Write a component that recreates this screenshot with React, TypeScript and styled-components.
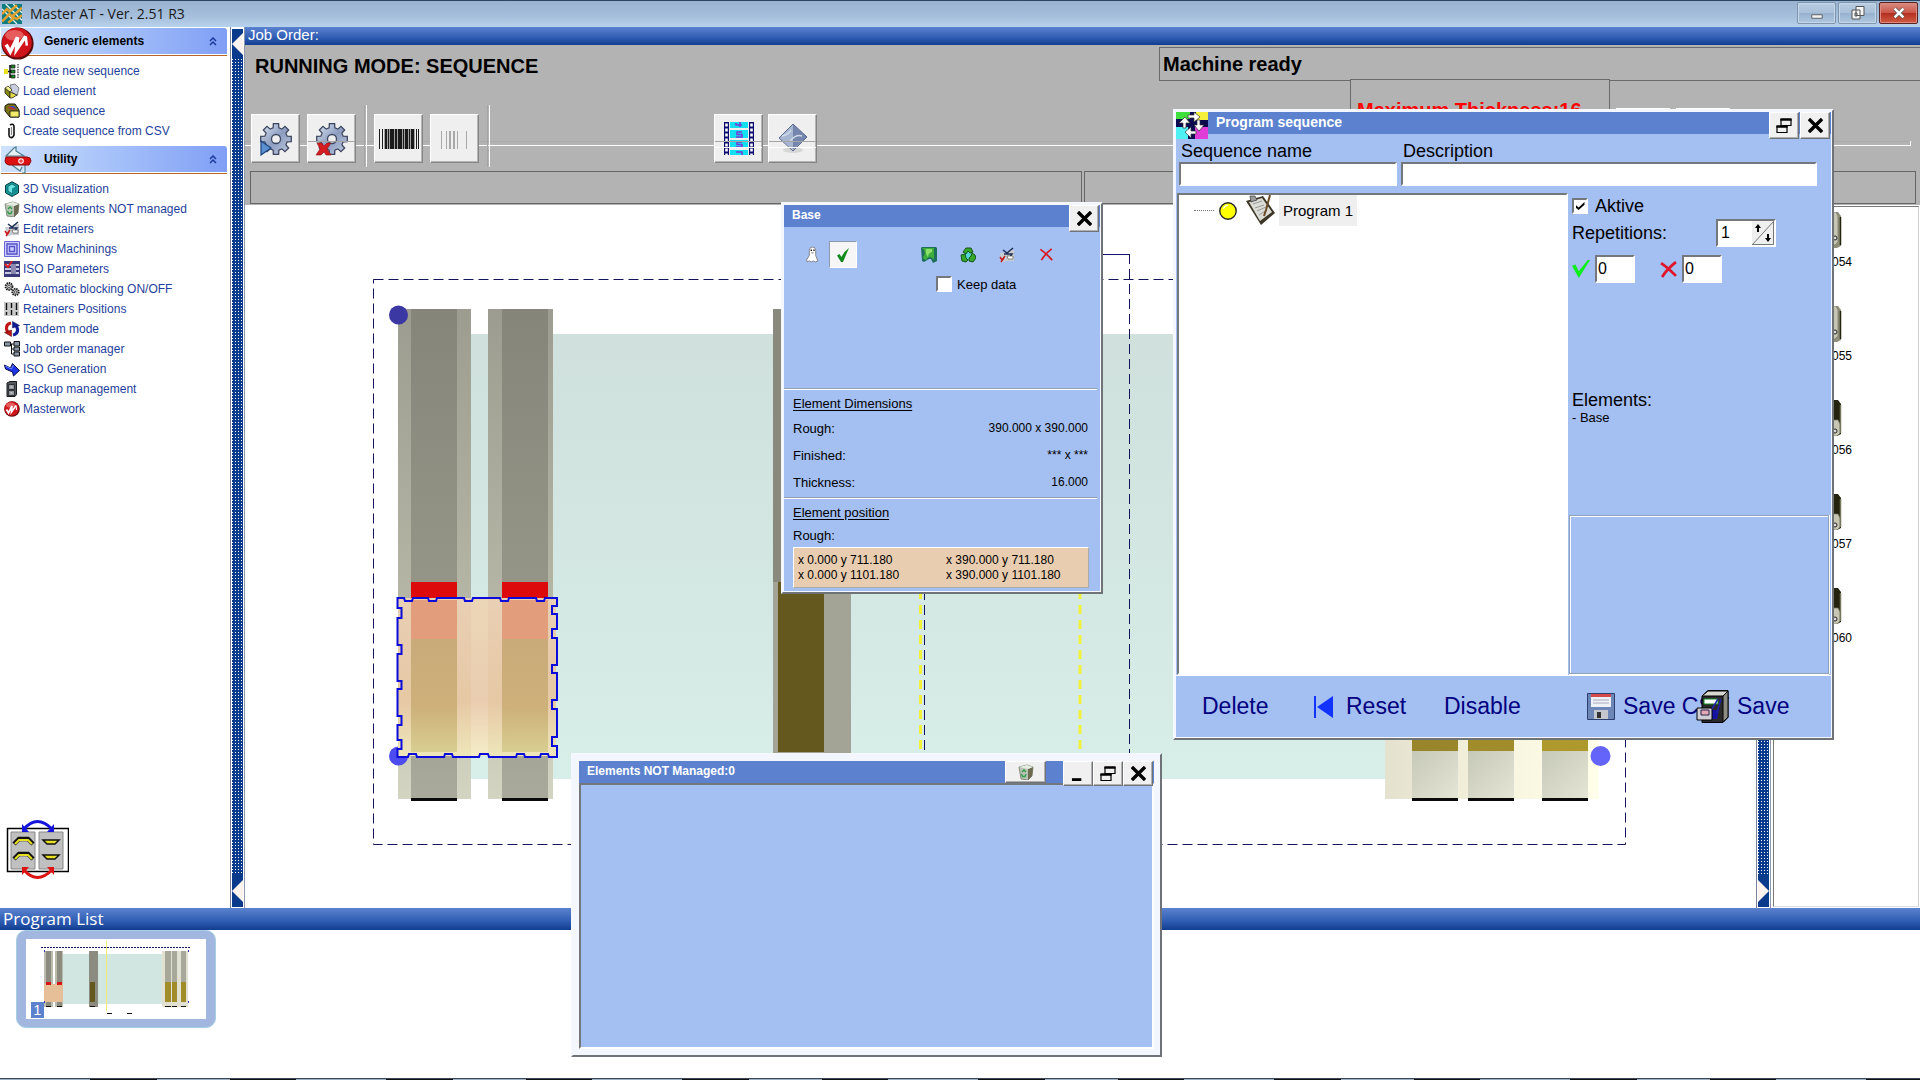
import React from "react";
import styled, { createGlobalStyle, css } from "styled-components";

const GlobalStyle = createGlobalStyle`
  * { box-sizing: border-box; }
  body { margin: 0; background: #fff; font-family: "Liberation Sans", Arial, sans-serif; color: #000; }
  button, input { font: inherit; color: inherit; }
  button { padding: 0; cursor: pointer; }
  svg { display: block; flex: none; }
`;

const FACE = "#a4bff1";
const CAPTION = "#5c82cf";
const NAVY = "#000080";

/* ---------- page frame ---------- */

const Page = styled.div`
  position: relative;
  display: flex;
  flex-direction: column;
  min-height: 100vh;
  overflow: hidden;
`;

const TitleBar = styled.header`
  display: flex;
  align-items: center;
  height: 27px;
  padding: 0 2px;
  border-top: 1px solid #2c4560;
  background: linear-gradient(#98b2cf, #a5bfdc 60%, #b8d2ec);
`;

const AppName = styled.h1`
  flex: 1;
  margin: 0 0 0 8px;
  font: 400 14px/20px "Open Sans", "Noto Sans", sans-serif;
  color: #1a1a1a;
`;

const FrameButtons = styled.div`
  display: flex;
  gap: 2px;
  align-self: flex-start;
  padding-top: 1px;
`;

const FrameButton = styled.button<{ $danger?: boolean }>`
  display: grid;
  place-items: center;
  width: 39px;
  height: 22px;
  border: 1px solid ${(p) => (p.$danger ? "#5b2222" : "#7f95ad")};
  border-radius: 2px;
  box-shadow: inset 0 0 0 1px ${(p) => (p.$danger ? "#dd8a80" : "#c5d8ea")};
  background: ${(p) =>
    p.$danger
      ? "linear-gradient(#d98c80, #c9584a 48%, #b52f20 52%, #cf5c44)"
      : "linear-gradient(#b9cde2, #a9c0d9 48%, #98b1cd 52%, #b0c8e0)"};
`;

const Workspace = styled.div`
  display: flex;
  flex: 1;
`;

/* ---------- sidebar ---------- */

const Sidebar = styled.nav`
  display: flex;
  flex-direction: column;
  width: 230px;
  padding: 1px 3px 0 1px;
`;

const GroupHeader = styled.h2`
  position: relative;
  display: flex;
  align-items: center;
  justify-content: space-between;
  height: 26px;
  margin: 0;
  padding: 0 10px 0 43px;
  border-radius: 0 3px 0 0;
  background: linear-gradient(90deg, #cfe2fd, #a9c4fa 45%, #809ff5);
  font-size: 12px;
  line-height: 16px;
`;

const GroupRule = styled.div`
  height: 2px;
  border-bottom: 1px solid #b5652a;
`;

const GroupIcon = styled.span`
  position: absolute;
  left: 0;
  top: -1px;
`;

const Links = styled.ul`
  margin: 0;
  padding: 5px 0;
  list-style: none;
`;

const SideLink = styled.a`
  display: flex;
  align-items: center;
  gap: 3px;
  height: 20px;
  padding-left: 3px;
  color: #1f3f9c;
  font-size: 12px;
  text-decoration: none;
`;

const SwapButton = styled.button`
  width: 64px;
  height: 60px;
  margin: auto 0 28px 4px;
  border: 0;
  background: none;
`;

/* ---------- splitters ---------- */

const Splitter = styled.div`
  display: flex;
  flex-direction: column;
  width: 15px;
  padding: 2px 1px 1px 1px;
  border-left: 1px solid #77829a;
  border-right: 1px solid #8b98ae;
  background: #fff;
`;

const SplitArrow = styled.button<{ $h: number }>`
  display: grid;
  place-items: center;
  height: ${(p) => p.$h}px;
  border: 0;
  background: #0a3a8c;
`;

const SplitGrip = styled.div`
  flex: 1;
  background: conic-gradient(at 1px 1px, transparent 75%, #fff 0) 0 0 / 3px 3px #0a3a8c;
`;

/* ---------- main area ---------- */

const Main = styled.main`
  display: flex;
  flex: 1;
  flex-direction: column;
  min-width: 0;
`;

const barGradient = css`
  background: linear-gradient(#5b82cf, #2f5db3 60%, #123d90);
  color: #fff;
`;

const JobBar = styled.div`
  ${barGradient}
  height: 18px;
  padding-left: 3px;
  font-size: 15px;
  line-height: 16px;
`;

const Console = styled.section`
  display: flex;
  flex-direction: column;
  height: 160px;
  background: #b3b3b3;
`;

const StatusRow = styled.div`
  display: flex;
  height: 60px;
`;

const RunningMode = styled.h2`
  flex: 1;
  margin: 0;
  padding: 9px 0 0 10px;
  font-size: 20px;
  line-height: 24px;
`;

const StatusColumn = styled.div`
  flex: 0 0 761px;
  padding-top: 2px;
`;

const MachineState = styled.div`
  height: 34px;
  padding-left: 3px;
  border: 1px solid #6a6a6a;
  border-right: 0;
  font-size: 20px;
  font-weight: 700;
  line-height: 32px;
`;

const ThicknessRow = styled.div`
  display: flex;
  gap: 6px;
  align-items: flex-start;
  margin: -2px 0 0 191px;
`;

const Thickness = styled.div`
  width: 260px;
  height: 60px;
  padding-left: 6px;
  border: 1px solid #6a6a6a;
  border-bottom: 0;
  background: #b3b3b3;
  color: #f00;
  font-size: 20px;
  font-weight: 700;
  line-height: 60px;
`;

const RearTab = styled.button`
  width: 54px;
  height: 24px;
  margin-top: 29px;
  border: 1px solid #fff;
  background: #efefef;
`;

const ToolRow = styled.div`
  position: relative;
  display: flex;
  align-items: flex-start;
  height: 62px;
  padding-left: 6px;
`;

const Groove = styled.div`
  position: absolute;
  left: 0;
  right: 9px;
  top: 36px;
  height: 5px;
  border: solid #fff;
  border-width: 0 1px 1px 0;
  box-shadow: inset 0 1px #aaa;
`;

const ToolButton = styled.button<{ $gap?: number; $line?: "thin" | "full" }>`
  position: relative;
  display: grid;
  place-items: center;
  width: 49px;
  height: 49px;
  margin: 9px 0 0 ${(p) => p.$gap ?? 0}px;
  border: 1px solid;
  border-color: #fff #858585 #858585 #fff;
  box-shadow: inset -1px -1px #b5b5b5;
  background: #efefef;
  &::after {
    content: "";
    position: absolute;
    display: ${(p) => (p.$line ? "block" : "none")};
    inset: 26px 0 auto 0;
    height: 5px;
    border-top: 1px solid #a5a5a5;
    border-bottom: 1px solid ${(p) => (p.$line === "full" ? "#fff" : "transparent")};
  }
`;

const ToolSeparator = styled.div`
  position: relative;
  width: 3px;
  height: 62px;
  margin-left: 8px;
  border-left: 1px solid #a5a5a5;
  border-right: 1px solid #fff;
`;

const InfoRow = styled.div`
  display: flex;
  gap: 2px;
  padding: 4px 4px 0 5px;
`;

const InfoCell = styled.div`
  flex: 1;
  height: 33px;
  border: 1px solid #666;
`;

const ViewRow = styled.div`
  display: flex;
  flex: 1;
`;

const Canvas = styled.div`
  flex: 1;
  min-width: 0;
  overflow: hidden;
`;

const ToolRack = styled.ul`
  flex: 0 0 146px;
  margin: 1px 1px 1px 2px;
  padding: 5px 0 0;
  border: 1px solid #777;
  border-color: #777 #ccc #ddd #777;
  list-style: none;
`;

const RackItem = styled.li`
  display: flex;
  flex-direction: column;
  gap: 6px;
  height: 94px;
  padding-left: 47px;
  font-size: 12px;
  line-height: 16px;
`;

const RackLabel = styled.span`
  padding-left: 11px;
`;

/* ---------- program list ---------- */

const ListBar = styled.div`
  ${barGradient}
  height: 22px;
  padding-left: 3px;
  font: 400 17px/21px "Open Sans", "Noto Sans", sans-serif;
`;

const ProgramList = styled.section`
  height: 148px;
  padding-left: 16px;
`;

const Thumb = styled.button`
  position: relative;
  display: block;
  width: 200px;
  height: 98px;
  padding: 7px 9px;
  border: 1px solid #a6cde2;
  border-radius: 10px;
  background: #a2b7e0;
`;

const ThumbIndex = styled.span`
  position: absolute;
  left: 14px;
  bottom: 9px;
  width: 13px;
  height: 16px;
  background: ${CAPTION};
  color: #fff;
  font-size: 14px;
  line-height: 16px;
`;

const TaskStrip = styled.footer`
  height: 2px;
  border-top: 1px solid #39485a;
  background: repeating-linear-gradient(90deg, #9fb0c0 0 90px, #111 90px 157px, #9fb0c0 157px 230px, #111 230px 296px);
`;

/* ---------- floating windows ---------- */

const Win = styled.section<{ $x: number; $y: number; $w: number; $frame?: boolean }>`
  position: absolute;
  left: ${(p) => p.$x}px;
  top: ${(p) => p.$y}px;
  width: ${(p) => p.$w}px;
  border: 2px solid;
  border-color: #f4f7fd #6f7377 #6f7377 #f4f7fd;
  padding: ${(p) => (p.$frame ? "6px" : "1px")};
  background: ${(p) => (p.$frame ? "#f3f6fd" : FACE)};
  box-shadow: ${(p) => (p.$frame ? "none" : "inset 0 0 0 1px #f4f7fd")};
`;

const Caption = styled.header`
  display: flex;
  align-items: flex-start;
  height: 22px;
  background: ${CAPTION};
  color: #fff;
`;

const CaptionText = styled.h3<{ $size: number }>`
  flex: 1;
  margin: 0 0 0 8px;
  font-size: ${(p) => p.$size}px;
  line-height: 20px;
`;

const CaptionButton = styled.button<{ $w?: number; $h?: number; $after?: number }>`
  position: relative;
  display: grid;
  place-items: center;
  width: ${(p) => p.$w ?? 30}px;
  height: ${(p) => p.$h ?? 27}px;
  margin-right: ${(p) => p.$after ?? 0}px;
  border: 1px solid;
  border-color: #fff #6f7377 #6f7377 #fff;
  box-shadow: inset -1px -1px #b0b0b0;
  background: #f0f0f0;
`;

const sunken = css`
  border: solid;
  border-width: 2px;
  border-color: #74787c #fff #fff #74787c;
  background: #fff;
`;

const Check = styled.input<{ $size: number }>`
  ${sunken}
  appearance: none;
  display: grid;
  place-items: center;
  width: ${(p) => p.$size}px;
  height: ${(p) => p.$size}px;
  margin: 0;
  &:checked::after {
    content: "";
    width: 9px;
    height: 8px;
    background: #000;
    clip-path: polygon(0 35%, 35% 68%, 100% 0, 100% 35%, 35% 100%, 0 68%);
  }
`;

/* Base window */

const IconBar = styled.div`
  display: flex;
  gap: 11px;
  margin-top: 14px;
  padding-left: 14px;
`;

const FlatButton = styled.button<{ $on?: boolean; $before?: number }>`
  display: grid;
  place-items: center;
  width: 28px;
  height: 27px;
  margin-left: ${(p) => p.$before ?? 0}px;
  border: 1px solid;
  border-color: ${(p) => (p.$on ? "#8d98ad #fff #fff #8d98ad" : "transparent")};
  background: ${(p) => (p.$on ? "#f6f6f6" : "none")};
`;

const KeepData = styled.label`
  display: flex;
  align-items: center;
  gap: 5px;
  height: 16px;
  margin: 8px 0 96px 152px;
  font-size: 13px;
`;

const Rule = styled.hr`
  height: 2px;
  margin: 1px 3px 2px 0;
  border: 0;
  border-top: 1px solid #92a0b4;
  background: #fff;
`;

const SubTitle = styled.h4`
  height: 23px;
  margin: 0;
  padding-left: 9px;
  font-size: 13px;
  font-weight: 400;
  line-height: 24px;
  text-decoration: underline;
  text-underline-offset: 2px;
`;

const DataRow = styled.div<{ $h?: number }>`
  display: flex;
  justify-content: space-between;
  height: ${(p) => p.$h ?? 27}px;
  padding: 0 12px 0 9px;
  font-size: 13px;
  line-height: ${(p) => p.$h ?? 27}px;
`;

const Figure = styled.span`
  font-size: 12px;
`;

const Corners = styled.div`
  display: grid;
  grid-template-columns: 148px 1fr;
  align-content: start;
  height: 41px;
  margin: 0 11px 3px 9px;
  padding: 5px 4px 0;
  border: 1px solid;
  border-color: #fff #aaa #aaa #fff;
  background: #e9cdb0;
  font-size: 12px;
  line-height: 15px;
`;

/* Program sequence window */

const SequenceIcon = styled.span`
  position: relative;
  height: 27px;
`;

const Fields = styled.div`
  display: grid;
  grid-template-columns: 218px 1fr;
  gap: 4px;
  padding: 7px 14px 0 3px;
`;

const Field = styled.label`
  display: block;
  font-size: 18px;
  line-height: 21px;
`;

const FieldText = styled.span`
  padding-left: 2px;
`;

const FieldBox = styled.input`
  ${sunken}
  display: block;
  width: 100%;
  height: 24px;
`;

const SequenceBody = styled.div`
  display: grid;
  grid-template-columns: 391px 1fr;
  margin-top: 7px;
  padding-left: 1px;
  min-height: 482px;
`;

const Tree = styled.div`
  ${sunken}
`;

const TreeNode = styled.div`
  display: flex;
  align-items: center;
  height: 31px;
  padding-left: 15px;
`;

const TreeBranch = styled.span`
  width: 20px;
  margin-right: 5px;
  border-top: 1px dotted #777;
`;

const TreeLabel = styled.span`
  height: 31px;
  margin-left: 2px;
  padding: 0 4px;
  background: #efefef;
  font-size: 15px;
  line-height: 31px;
`;

const Side = styled.div`
  display: flex;
  flex-direction: column;
  padding: 3px 2px 0 4px;
`;

const SideLine = styled.div<{ $h: number; $top?: number }>`
  display: flex;
  align-items: center;
  height: ${(p) => p.$h}px;
  margin-top: ${(p) => p.$top ?? 0}px;
  font-size: 18px;
`;

const ActiveLabel = styled.label`
  display: flex;
  align-items: center;
  gap: 7px;
`;

const Spinner = styled.div`
  ${sunken}
  display: flex;
  width: 60px;
  height: 28px;
  margin: 0 53px 0 auto;
`;

const SpinnerValue = styled.input`
  width: 34px;
  min-width: 0;
  padding: 0 3px;
  border: 0;
  background: none;
  font-size: 16px;
`;

const SpinnerButton = styled.button`
  width: 22px;
  border: 0;
  background: #efefef;
`;

const CountBox = styled.input<{ $after?: number }>`
  ${sunken}
  width: 40px;
  height: 28px;
  margin: 0 ${(p) => p.$after ?? 0}px 0 5px;
  padding: 0 1px;
  font-size: 16px;
`;

const ElementName = styled.div`
  font-size: 13px;
  line-height: 16px;
`;

const Preview = styled.div`
  flex: 1;
  margin: 89px 0 1px -3px;
  border: 1px solid #8fa0ba;
  box-shadow: inset 1px 1px #fff, 0 1px #fff, 1px 0 #fff;
`;

const Actions = styled.footer`
  display: grid;
  grid-template-columns: 112px 130px 143px 109px 1fr;
  align-items: center;
  height: 62px;
  padding-left: 26px;
  border-top: 1px solid #fff;
`;

const Action = styled.button`
  position: relative;
  display: flex;
  align-items: center;
  gap: 8px;
  width: max-content;
  border: 0;
  background: none;
  color: ${NAVY};
  font-size: 23px;
  white-space: nowrap;
`;

/* Elements NOT Managed window */

const Tray = styled.div`
  ${sunken}
  height: 266px;
  background: ${FACE};
`;

/* ---------- drawings ---------- */

const Ico = ({ s = 16, w, h, children, vb }: { s?: number; w?: number; h?: number; vb?: string; children: React.ReactNode }) => (
  <svg width={w ?? s} height={h ?? s} viewBox={vb ?? "0 0 16 16"} aria-hidden="true">{children}</svg>
);

const BinArt = () => (
  <>
    <path d="M1 3l8-2 6 2-1 9-4 4-7-1z" fill="#b9c4b4" stroke="#5d6b58" strokeWidth=".7" />
    <path d="M10 5l5-2-1 9-4 4z" fill="#6d6a52" />
    <path d="M1 3l9 2 5-2-6-2z" fill="#e6ece2" />
    <path d="M4 8l2-2 2 2M8 10l-1 2.500H4.500L3.500 10" fill="none" stroke="#2f9a4a" strokeWidth="1.300" />
  </>
);

const MasterArt = () => (
  <>
    <circle cx="8" cy="8" r="7.800" fill="#5a0808" />
    <circle cx="7.700" cy="7.600" r="7.200" fill="#d0141c" />
    <ellipse cx="6.500" cy="4" rx="4.500" ry="2.600" fill="#ef7a78" opacity=".7" />
    <path d="M2.500 8.500l2 3.500L8 5 7.500 11l4.500-6.500" fill="none" stroke="#fff" strokeWidth="1.700" />
    <path d="M12 4.500l.5 4.500" fill="none" stroke="#fff" strokeWidth="1.200" />
  </>
);

const EditArt = () => (
  <>
    <path d="M1 6h6l3-3h5v11H7l-2 1H3z" fill="#c9cdd2" />
    <path d="M4 3l4 3 6-5M5 7h8l-3 4" fill="none" stroke="#1f2f55" strokeWidth="1.500" />
    <path d="M8 9h6v3H9z" fill="#fff" stroke="#444" strokeWidth=".6" />
    <path d="M1 10l2 3 3-4M2 15l3-4" fill="none" stroke="#c81818" strokeWidth="1.400" />
  </>
);

const art: Record<string, React.ReactNode> = {
  newSeq: (
    <>
      <path d="M0 6h4v5H0z" fill="#e8e020" />
      <path d="M4 8.500h3M6 2v13M6 3h5M6 8h5M6 13h5" stroke="#111" strokeWidth="1.500" />
      <path d="M7 2h4v3H7zM7 7h4v3H7zM7 12h4v3H7z" fill="#1f8a2c" stroke="#111" strokeWidth=".7" />
      <path d="M14 1v15" stroke="#888" strokeWidth="2" strokeDasharray="1.500 1" />
    </>
  ),
  loadEl: (
    <>
      <path d="M6 2l5-1 4 4-2 8-5-4z" fill="#c8cce0" stroke="#555" strokeWidth=".7" />
      <path d="M1 5l5 4v6l-5-5z" fill="#8a8a10" stroke="#222" strokeWidth=".8" />
      <path d="M6 9l7 3-5 3H6z" fill="#e6df4a" stroke="#222" strokeWidth=".8" />
      <path d="M1 5l3-2 4 4-2 2z" fill="#f4f08a" stroke="#222" strokeWidth=".7" />
    </>
  ),
  loadSeq: (
    <>
      <path d="M1 3l3-2h7l4 6v7H6L1 8z" fill="#7a7410" stroke="#111" />
      <path d="M6 8h9v6H6z" fill="#f3ea6a" stroke="#111" strokeWidth=".8" />
      <path d="M3 4l6-1 4 3-5 1z" fill="#b03a3a" />
      <path d="M5 3l5 0 3 3z" fill="#2f4fc0" />
    </>
  ),
  csv: (
    <>
      <path d="M6 2q3-2 4 1v9q-1 3-3.500 2.500Q5 14 5 12V5" fill="none" stroke="#111" strokeWidth="1.600" />
      <path d="M7.500 4v8" stroke="#888" strokeWidth="1.200" />
    </>
  ),
  cube: (
    <>
      <path d="M8 .7l6.500 3.600v7.500L8 15.500 1.500 11.800V4.300z" fill="#17989c" stroke="#06393c" />
      <path d="M8 3l4 2.300v5L8 12.600 4 10.300v-5z" fill="#6fe3e0" stroke="#0b5c60" strokeWidth=".8" />
      <path d="M8 7.500v5l4-2.300v-5z" fill="#129094" />
    </>
  ),
  bin: <BinArt />,
  edit: <EditArt />,
  machinings: (
    <>
      <path d="M.5.500h15v15H.500z" fill="#cfcfff" stroke="#6a68d8" />
      <path d="M3 3h10v10H3zM5.500 5.500h5v5h-5z" fill="none" stroke="#5450c8" strokeWidth="1.400" />
    </>
  ),
  iso: (
    <>
      <path d="M0 0h16v16H0z" fill="#3b3a78" />
      <path d="M1 4h14M1 8h14M1 12h14" stroke="#c9c9e4" strokeWidth="2" />
      <path d="M7 3h5v10H7z" fill="#8c88b0" />
      <path d="M1 3l3 3 4-6" fill="none" stroke="#e02020" strokeWidth="1.800" />
    </>
  ),
  gears: (
    <>
      <circle cx="5" cy="5.500" r="3.400" fill="#bbb" stroke="#222" strokeWidth="2" strokeDasharray="1.400 .8" />
      <circle cx="5" cy="5.500" r="1.200" fill="#fff" stroke="#222" strokeWidth=".7" />
      <circle cx="11.500" cy="11" r="3.200" fill="#bbb" stroke="#222" strokeWidth="2" strokeDasharray="1.400 .8" />
      <circle cx="11.500" cy="11" r="1.100" fill="#fff" stroke="#222" strokeWidth=".7" />
    </>
  ),
  retainers: (
    <>
      <path d="M0 1h15v14H0z" fill="#c9c9c9" />
      <path d="M2.500 2v7M7.500 2v5M12.500 2v7M2.500 11v3M7.500 9v5M12.500 11v3" stroke="#111" strokeWidth="1.400" />
    </>
  ),
  tandem: (
    <>
      <path d="M7 2Q2 3 2.500 8l1.500 4" fill="none" stroke="#c01414" strokeWidth="3.200" />
      <path d="M.5 11.500l7 4V9z" fill="#c01414" stroke="#400" strokeWidth=".5" />
      <path d="M9 14q5-1 4.500-6L12 4" fill="none" stroke="#101e9c" strokeWidth="3.200" />
      <path d="M15.500 4.500l-7-4V7z" fill="#101e9c" stroke="#004" strokeWidth=".5" />
    </>
  ),
  jobs: (
    <>
      <path d="M5 3h5M7.500 3v10h3M7.500 8h3" fill="none" stroke="#111" />
      <path d="M.5 1h6v4h-6zM10 .5h5.500V5H10zM10 6h5.500v4H10zM10 11h5.500v4H10z" fill="#8b97a6" stroke="#111" />
    </>
  ),
  arrow: (
    <>
      <path d="M.5 4l6 3 2-4.500 7 7-6 5.500-1-4-7-3z" fill="#1e34e0" stroke="#08104c" />
      <path d="M1.500 5l6 3 2-4" fill="none" stroke="#6f8cff" />
    </>
  ),
  backup: (
    <>
      <path d="M3 2l3-1.500h6.500v13L11 15.500H3z" fill="#55595e" stroke="#17191b" />
      <path d="M4.500 3.500h6v5h-6zM4.500 9.500h6v5h-6z" fill="#8e9499" stroke="#222" strokeWidth=".8" />
      <path d="M6.500 6h2M6.500 12h2" stroke="#eee" />
    </>
  ),
  master: <MasterArt />,
  ghost: (
    <>
      <path d="M5 4q0-3 3-3t3 3v5l2 5-2 1-2-1-2 1-2-1-2 1-.5-2L5 9z" fill="#fff" stroke="#777" strokeWidth=".8" />
      <path d="M6.300 4h1.200M8.800 4H10" stroke="#000" strokeWidth="1.300" />
      <path d="M7 6.500h2" stroke="#555" strokeWidth=".8" />
    </>
  ),
  tick: <path d="M2 8.500l2.500-1.500 2 3Q9 4.500 14 1 11 8 8 15H6z" fill="#138a1e" />,
  exportArrow: (
    <>
      <path d="M0 1l1-1h14l1 1v13l-4 2-2-4-2 0-5 3-2-1z" fill="#1d6f5a" />
      <path d="M1 1h12v12l-2-2q-3-3-6 2-3-1-3-3 3-3 1-7z" fill="#3fae3c" />
      <path d="M5 2h6v3Q7 6 7 10 4 6 5 2z" fill="#8be06a" />
    </>
  ),
  recycle: (
    <>
      <circle cx="8" cy="8.500" r="4.200" fill="#53d6d8" />
      <path d="M3 5l3-4h5l2 4-3 1-2-2-2 3zM1 8l4-1 1 4 2 2-2 2-4-1zM15 8l-3-2-1 3-2 2v3l4 1 3-4z" fill="#35a82a" stroke="#0c4a12" strokeWidth=".9" />
    </>
  ),
  cross: <path d="M1.500 2.500Q8 7 14 14M13.500 2Q7 7 2.500 14" fill="none" stroke="#d9141c" strokeWidth="1.800" />,
};

const gearPath = (() => {
  const pts: string[] = [];
  const teeth = 8;
  for (let i = 0; i < teeth; i++) {
    const a = (i / teeth) * Math.PI * 2 - Math.PI / 2;
    [[-0.25, 11.5], [-0.17, 15.5], [0.17, 15.5], [0.25, 11.5]].forEach(([d, r]) => {
      pts.push(`${(16 + Math.cos(a + d) * r).toFixed(2)} ${(16 + Math.sin(a + d) * r).toFixed(2)}`);
    });
  }
  return `M${pts.join("L")}Z`;
})();

const Gear = ({ stop }: { stop?: boolean }) => (
  <svg width="34" height="34" viewBox="0 0 34 34" aria-hidden="true">
    <defs>
      <linearGradient id="steel" x1="0" y1="0" x2="1" y2="1">
        <stop offset="0" stopColor="#dfe6f2" />
        <stop offset=".5" stopColor="#8c9cc0" />
        <stop offset="1" stopColor="#c3cde0" />
      </linearGradient>
    </defs>
    <path d={gearPath} transform="translate(1 1)" fill="url(#steel)" stroke="#3d4660" strokeWidth="1.300" />
    <circle cx="17" cy="17" r="4.500" fill="#efefef" stroke="#3d4660" strokeWidth="1.300" />
    {stop ? (
      <path d="M2 21h5l2 3 3-3h4l-4 6 4 6h-5l-2-3-3 3H1l4-6z" fill="#d41e22" stroke="#8c1014" strokeWidth=".6" />
    ) : (
      <path d="M2 19l10 7-10 7z" fill="#5c8fd0" stroke="#1f4580" strokeWidth="1.200" />
    )}
  </svg>
);

const Barcode = ({ faint }: { faint?: boolean }) => {
  const bars = faint
    ? [[6, 1], [11, 1], [14, 2], [18, 2], [22, 1], [31, 1]]
    : [[0, 1], [3, 1], [6, 2], [9, 1], [11, 4], [16, 2], [19, 4], [24, 1], [26, 3], [30, 1], [32, 3], [37, 1], [39, 1]];
  return (
    <svg width="40" height="20" viewBox="0 0 40 20" aria-hidden="true">
      {!faint && <rect x="5" width="31" height="20" fill="#a0a0a0" />}
      {bars.map(([x, w]) => (
        <rect key={x} x={x} y={faint ? 2 : 0} width={w} height={faint ? 18 : 20} fill={faint ? "#a8a8a8" : "#1a1a1a"} />
      ))}
    </svg>
  );
};

const Film = () => (
  <svg width="30" height="33" viewBox="0 0 30 33" aria-hidden="true">
    <path d="M0 0h5v33H0zM25 0h5v33h-5z" fill="#0a0a6e" />
    <path d="M2.500 1.500v33M27.500 1.500v33" stroke="#fff" strokeWidth="2.600" strokeDasharray="3 2" />
    <path d="M6 0h18v6H6zM6 8h18v8H6zM6 18h18v8H6zM6 28h18v5H6z" fill="#12dff0" />
    <path d="M12 1v2h6M16 0v5M18 10h-5v2.500h5V15h-6M18 20h-5v2.500h5V25h-6M12 30h6v3" fill="none" stroke="#7a3ad8" strokeWidth="1.500" />
  </svg>
);

const Diamond = () => (
  <svg width="30" height="32" viewBox="0 0 30 32" aria-hidden="true">
    <ellipse cx="15" cy="27" rx="10" ry="3" fill="#d6d6d6" />
    <path d="M15 1L1 15l14 12z" fill="#a7b6d0" />
    <path d="M15 1l14 13-14 13z" fill="#7486ad" />
    <path d="M4 13q6-1 9-6M12 18q6-7 12-5" fill="none" stroke="#cfd9e8" strokeWidth="1.500" />
    <path d="M15 1L1 15l14 13 14-14z" fill="none" stroke="#5a6a90" />
  </svg>
);

const CloseGlyph = () => (
  <Ico s={15}><path d="M1 1l14 14M15 1L1 15" stroke="#000" strokeWidth="3.600" /></Ico>
);

const RestoreGlyph = () => (
  <Ico s={16}>
    <path d="M5 1.500h10v6H5zM1 8.500h10v6H1z" fill="#f0f0f0" stroke="#000" strokeWidth="1.200" />
    <path d="M4.400 1.500h11.200M.4 8.500h11.200" stroke="#000" strokeWidth="2.400" />
  </Ico>
);

const Chevrons = () => (
  <Ico w={8} h={9} vb="0 0 8 9">
    <path d="M1 4l3-3 3 3M1 8l3-3 3 3" fill="none" stroke="#1c3a9c" strokeWidth="1.500" />
  </Ico>
);

const notched = (() => {
  const l = 397.5, r = 557, t = 598, b = 757;
  const top = [[404, 413], [428, 437], [464, 473], [500, 509], [536, 545]];
  const right = [[606, 614], [629, 638], [665, 673], [700, 709], [737, 746]];
  const bottom = [[408, 417], [444, 453], [479, 489], [516, 525], [540, 549]].reverse();
  const left = [[608, 618], [645, 654], [681, 689], [716, 725], [740, 749]].reverse();
  let d = `M${l} ${t}`;
  top.forEach(([a, c]) => (d += `H${a}l1 3H${c - 1}l1-3`));
  d += `H${r}`;
  right.forEach(([a, c]) => (d += `V${a}h-5V${c}h5`));
  d += `V${b}`;
  bottom.forEach(([a, c]) => (d += `H${c}l-1-3H${a + 1}l-1 3`));
  d += `H${l}`;
  left.forEach(([a, c]) => (d += `V${c}h4V${a}h-4`));
  return d + "Z";
})();

const Worktable = () => (
  <svg width="1510" height="700" viewBox="245 205 1510 700" role="img" aria-label="Work table">
    <defs>
      <linearGradient id="rail" x1="0" y1="0" x2="0" y2="1">
        <stop offset="0" stopColor="#85857a" /><stop offset=".6" stopColor="#969688" /><stop offset="1" stopColor="#aaaa9c" />
      </linearGradient>
      <linearGradient id="edge" x1="0" y1="0" x2="0" y2="1">
        <stop offset="0" stopColor="#9c9c90" /><stop offset=".6" stopColor="#b6b6a6" /><stop offset="1" stopColor="#d4d4c2" />
      </linearGradient>
      <linearGradient id="glass" x1="0" y1="0" x2="0" y2="1">
        <stop offset="0" stopColor="#cfe0dd" /><stop offset="1" stopColor="#d8eee8" />
      </linearGradient>
      <linearGradient id="board" x1="0" y1="0" x2="0" y2="1">
        <stop offset="0" stopColor="#e9cfb4" /><stop offset=".65" stopColor="#e6c8a4" /><stop offset="1" stopColor="#eee6ba" />
      </linearGradient>
      <linearGradient id="boardRail" x1="0" y1="0" x2="0" y2="1">
        <stop offset="0" stopColor="#c9ab7a" /><stop offset=".6" stopColor="#cdb07a" /><stop offset="1" stopColor="#d8ce92" />
      </linearGradient>
      <linearGradient id="gap" x1="0" y1="0" x2="0" y2="1">
        <stop offset="0" stopColor="#ecd6b8" /><stop offset=".65" stopColor="#eacdb0" /><stop offset="1" stopColor="#f4edc8" />
      </linearGradient>
      <linearGradient id="cream" x1="0" y1="0" x2="1" y2="0">
        <stop offset="0" stopColor="#e4e1cf" /><stop offset=".6" stopColor="#f8f6e0" /><stop offset="1" stopColor="#fffeea" />
      </linearGradient>
      <linearGradient id="pale" x1="0" y1="0" x2="1" y2="1">
        <stop offset="0" stopColor="#c6c8b8" /><stop offset="1" stopColor="#e4e5d4" />
      </linearGradient>
    </defs>
    <path d="M373.500 279.500H1625.500V844.500H373.500z" fill="none" stroke="#14145a" strokeDasharray="10 5" />
    <rect x="440" y="334" width="960" height="445" fill="url(#glass)" />
    <rect x="398" y="309" width="73" height="490" fill="url(#edge)" />
    <rect x="471" y="309" width="17" height="25" fill="#fff" />
    <rect x="440" y="334" width="0" height="0" />
    <rect x="411" y="309" width="46" height="490" fill="url(#rail)" />
    <rect x="488" y="309" width="65" height="490" fill="url(#edge)" />
    <rect x="502" y="309" width="46" height="490" fill="url(#rail)" />
    <rect x="773" y="309" width="78" height="444" fill="#a3a396" />
    <rect x="773" y="309" width="10" height="273" fill="#89897d" />
    <rect x="778" y="582" width="46" height="170" fill="#65581e" />
    <circle cx="398.500" cy="315" r="9.500" fill="#3b38a4" />
    <circle cx="398.500" cy="756" r="9.500" fill="#4c4cf0" />
    <path d="M411 582h46v17h-46zM502 582h46v17h-46z" fill="#dd0a0c" />
    <rect x="398" y="598" width="158" height="158" fill="url(#board)" />
    <rect x="471" y="598" width="17" height="158" fill="url(#gap)" />
    <path d="M411 600h46v39h-46zM502 600h46v39h-46z" fill="#e29d7c" />
    <path d="M411 639h46v113h-46zM502 639h46v113h-46z" fill="url(#boardRail)" />
    <path d={notched} fill="none" stroke="#0b0bdc" strokeWidth="2" />
    <path d="M411 798h46v3h-46zM502 798h46v3h-46zM1412 798h46v3h-46zM1468 798h46v3h-46zM1542 798h46v3h-46z" fill="#0a0a0a" />
    <rect x="1385" y="600" width="214" height="199" fill="url(#cream)" />
    {[1412, 1468, 1542].map((x, i) => (
      <g key={x}>
        <rect x={x} y="700" width="46" height="51" fill={["#99852a", "#a08c2a", "#ae9a2c"][i]} />
        <rect x={x} y="751" width="46" height="47" fill="url(#pale)" />
        <rect x={x} y="798" width="46" height="3" fill="#0a0a0a" />
      </g>
    ))}
    <circle cx="1600.500" cy="756" r="10" fill="#6464fb" />
    <path d="M1100 254.500h29.500" stroke="#14147a" />
    <path d="M1129.500 254V844M924.500 590V844" stroke="#14145a" strokeDasharray="10 5" />
    <path d="M920.500 590V760M1080 590V760" stroke="#f2f23c" strokeWidth="3" strokeDasharray="9 6" />
  </svg>
);

const ThumbArt = () => (
  <svg width="180" height="80" viewBox="26 938 180 80" aria-hidden="true">
    <rect x="26" y="938" width="180" height="80" fill="#fff" />
    <path d="M41 946.500h150" stroke="#15155e" strokeDasharray="2 1" />
    <rect x="60" y="953" width="105" height="50" fill="#d2e6e1" />
    <path d="M44 950h9v56h-9zM55 950h8v56h-8z" fill="#bcbcae" />
    <path d="M46 950h5v56h-5zM57 950h5v56h-5zM89 950h9v56h-9z" fill="#8b8b80" />
    <path d="M44 983h19v18H44z" fill="#e6bf98" />
    <path d="M46 981h5v3h-5zM57 981h5v3h-5z" fill="#d81414" />
    <path d="M90 981h5v20h-5z" fill="#65581e" />
    <path d="M162 950h26v56h-26z" fill="#e2e0d0" />
    <path d="M165 950h6v31h-6zM172 950h5v31h-5zM181 950h5v31h-5z" fill="#a8a89a" />
    <path d="M165 981h6v20h-6zM172 981h5v20h-5zM181 981h5v20h-5z" fill="#a18c2a" />
    <path d="M46 1005.500h5M57 1005.500h5M90 1005.500h5M165 1005.500h6M172 1005.500h5M181 1005.500h5M107 1012.500h5M127 1012.500h5" stroke="#111" />
    <path d="M106.500 940v70" stroke="#f0ee70" />
    <path d="M44 950h1M188 950h1M188 1001h1M44 1001h1" stroke="#3030b0" strokeWidth="2" />
  </svg>
);

const SwapArt = () => (
  <svg width="64" height="60" viewBox="0 0 64 60" aria-hidden="true">
    <path d="M2.500 8.500h61v43h-61z" fill="#fff" stroke="#000" strokeWidth="1.500" />
    <path d="M6 12h24v37H6zM34 12h24v37H34z" fill="#c0c0c0" stroke="#888" />
    {[20, 35].map((y) => (
      <g key={y}>
        <path d={`M9 ${y + 4}l5-5h9l5 5`} fill="none" stroke="#111" strokeWidth="4.500" />
        <path d={`M10 ${y + 4}l4-4h9l4 4`} fill="none" stroke="#e8e020" strokeWidth="2" />
        <path d={`M38 ${y}h16l-4 4h-8z`} fill="#e8e020" stroke="#111" strokeWidth="1.500" />
      </g>
    ))}
    <path d="M19 9q13-15 28 0" fill="none" stroke="#1414dc" strokeWidth="3" />
    <path d="M17 4v8h7zM49 4v8h-7z" fill="#1414dc" />
    <path d="M19 50q13 15 28 0" fill="none" stroke="#dc1414" strokeWidth="3" />
    <path d="M17 55v-8h7zM49 55v-8h-7z" fill="#dc1414" />
  </svg>
);

const RackArt = ({ dark }: { dark: boolean }) => (
  <svg width="21" height="36" viewBox="0 0 21 36" aria-hidden="true">
    <path d="M0 0h17l3 4v30l-4 2H0z" fill={dark ? "#23230e" : "#8f8f78"} />
    <path d={dark ? "M10 20h7l2 4v9l-3 3h-6z" : "M10 0h5l2 4v26l-3 3h-4z"} fill="#c6c6b2" stroke="#77776a" strokeWidth=".7" />
    <path d="M19.500 5v28" stroke={dark ? "#77775c" : "#23230e"} strokeWidth="1.500" />
    <circle cx="14" cy={dark ? 31 : 26} r="2" fill="#ddd" stroke="#222" />
  </svg>
);

/* ---------- data ---------- */

const generic: [string, string][] = [
  ["newSeq", "Create new sequence"],
  ["loadEl", "Load element"],
  ["loadSeq", "Load sequence"],
  ["csv", "Create sequence from CSV"],
];

const utility: [string, string][] = [
  ["cube", "3D Visualization"],
  ["bin", "Show elements NOT managed"],
  ["edit", "Edit retainers"],
  ["machinings", "Show Machinings"],
  ["iso", "ISO Parameters"],
  ["gears", "Automatic blocking ON/OFF"],
  ["retainers", "Retainers Positions"],
  ["tandem", "Tandem mode"],
  ["jobs", "Job order manager"],
  ["arrow", "ISO Generation"],
  ["backup", "Backup management"],
  ["master", "Masterwork"],
];

const rack = ["054", "055", "056", "057", "060"];

const LinkList = ({ items }: { items: [string, string][] }) => (
  <Links>
    {items.map(([icon, text]) => (
      <li key={text}>
        <SideLink href="#"><Ico s={16}>{art[icon]}</Ico>{text}</SideLink>
      </li>
    ))}
  </Links>
);

const SplitBar = ({ dir, top }: { dir: "left" | "right"; top?: boolean }) => {
  const tri = (
    <Ico w={11} h={22} vb="0 0 11 22">
      <path d={dir === "left" ? "M11 0v22L0 11z" : "M0 0v22l11-11z"} fill="#fdf3ee" />
    </Ico>
  );
  return (
    <Splitter>
      {top && <SplitArrow $h={30} aria-label="Collapse">{tri}</SplitArrow>}
      <SplitGrip />
      <SplitArrow $h={33} aria-label="Collapse">{tri}</SplitArrow>
    </Splitter>
  );
};

/* ---------- windows ---------- */

const BaseWindow = () => (
  <Win $x={781} $y={202} $w={322}>
    <Caption>
      <CaptionText $size={12}>Base</CaptionText>
      <CaptionButton $after={1} aria-label="Close"><CloseGlyph /></CaptionButton>
    </Caption>
    <IconBar>
      <FlatButton aria-label="Ghost"><Ico s={17}>{art.ghost}</Ico></FlatButton>
      <FlatButton $on $before={-8} aria-label="Confirm"><Ico s={16}>{art.tick}</Ico></FlatButton>
      <FlatButton $before={47} aria-label="Export"><Ico s={16}>{art.exportArrow}</Ico></FlatButton>
      <FlatButton aria-label="Rotate"><Ico s={16}>{art.recycle}</Ico></FlatButton>
      <FlatButton aria-label="Edit"><Ico s={16}>{art.edit}</Ico></FlatButton>
      <FlatButton aria-label="Delete"><Ico s={15}>{art.cross}</Ico></FlatButton>
    </IconBar>
    <KeepData><Check type="checkbox" $size={16} />Keep data</KeepData>
    <Rule />
    <SubTitle>Element Dimensions</SubTitle>
    <DataRow>Rough:<Figure>390.000 x 390.000</Figure></DataRow>
    <DataRow>Finished:<Figure>*** x ***</Figure></DataRow>
    <DataRow>Thickness:<Figure>16.000</Figure></DataRow>
    <Rule />
    <SubTitle>Element position</SubTitle>
    <DataRow $h={23}>Rough:</DataRow>
    <Corners>
      <span>x 0.000 y 711.180</span><span>x 390.000 y 711.180</span>
      <span>x 0.000 y 1101.180</span><span>x 390.000 y 1101.180</span>
    </Corners>
  </Win>
);

const SequenceWindow = () => (
  <Win $x={1173} $y={109} $w={661}>
    <Caption>
      <SequenceIcon>
        <Ico w={32} h={27} vb="0 0 32 27">
          <path d="M0 0h32v27H0z" fill="#0a0a50" />
          <path d="M0 0h14v7H0z" fill="#3ee03e" /><path d="M20 0h12v8H20z" fill="#f4f03c" />
          <path d="M0 15h12v12H0z" fill="#4ff0f4" /><path d="M19 15h13v12H19z" fill="#e23cd8" />
          <path d="M12 3h6V0l6 5-6 5V6h-6zM24 8v5h4l-5 6-5-6h3V8zM20 22h-5v4l-6-6 6-5v4h5zM7 16v-5H3l6-6 5 6h-4v5z" fill="#fff" stroke="#333" strokeWidth=".7" />
        </Ico>
      </SequenceIcon>
      <CaptionText $size={14}>Program sequence</CaptionText>
      <CaptionButton $after={1} aria-label="Restore"><RestoreGlyph /></CaptionButton>
      <CaptionButton $after={1} aria-label="Close"><CloseGlyph /></CaptionButton>
    </Caption>
    <Fields>
      <Field><FieldText>Sequence name</FieldText><FieldBox type="text" /></Field>
      <Field><FieldText>Description</FieldText><FieldBox type="text" /></Field>
    </Fields>
    <SequenceBody>
      <Tree>
        <TreeNode>
          <TreeBranch />
          <Ico s={18}><circle cx="8" cy="8" r="7.300" fill="#ff0" stroke="#222" strokeWidth="1.200" /><path d="M4 6q1-3 4-3" stroke="#fff" fill="none" /></Ico>
          <Ico w={40} h={31} vb="-8 0 40 31">
            <path d="M1 6L18 1l12 17-14 12z" fill="#3c3626" />
            <path d="M4 7l13-4 10 14-12 9z" fill="#dcdcd6" />
            <path d="M8 9l9-3M10 13l9-3M12 16l9-4M14 20l8-5" stroke="#9a9a9a" />
            <path d="M5 1l5 0 2 4-6 2z" fill="#9a9a9a" stroke="#333" strokeWidth=".7" />
            <path d="M25 0l-4 15-2 6" fill="none" stroke="#6b4a24" strokeWidth="2" />
          </Ico>
          <TreeLabel>Program 1</TreeLabel>
        </TreeNode>
      </Tree>
      <Side>
        <SideLine $h={20}>
          <ActiveLabel><Check type="checkbox" defaultChecked $size={16} />Aktive</ActiveLabel>
        </SideLine>
        <SideLine $h={28} $top={3}>
          <label htmlFor="repetitions">Repetitions:</label>
          <Spinner>
            <SpinnerValue id="repetitions" type="text" defaultValue="1" />
            <SpinnerButton aria-label="Change repetitions">
              <Ico w={22} h={24} vb="0 0 22 24">
                <path d="M0 24L22 0" stroke="#777" />
                <path d="M21.500 0v23.500H0" fill="none" stroke="#777" />
                <path d="M6 3l3 4H7v4H5V7H3zM16 21l-3-4h2v-4h2v4h2z" fill="#000" />
              </Ico>
            </SpinnerButton>
          </Spinner>
        </SideLine>
        <SideLine $h={28} $top={8}>
          <Ico s={18}><path d="M0 5l3-1 3 6 8-10h2L6 16z" fill="#0aee1a" /></Ico>
          <CountBox type="text" aria-label="Completed" defaultValue="0" $after={25} />
          <Ico s={17}><path d="M1 2Q7 6 15 14M15 1Q7 7 2 15" fill="none" stroke="#e0142a" strokeWidth="2.600" /></Ico>
          <CountBox type="text" aria-label="Failed" defaultValue="0" />
        </SideLine>
        <SideLine $h={20} $top={107}>Elements:</SideLine>
        <ElementName>- Base</ElementName>
        <Preview />
      </Side>
    </SequenceBody>
    <Actions>
      <Action>Delete</Action>
      <Action>
        <Ico w={24} h={22} vb="0 0 24 22"><path d="M0 0h2v22H0zM19 0v22L3 11z" fill="#1232ff" /></Ico>
        Reset
      </Action>
      <Action>Disable</Action>
      <Action>
        <Ico w={28} h={27} vb="0 0 28 27">
          <path d="M.5.500h27v26H.500z" fill="#6d86b8" stroke="#2c3f6e" />
          <path d="M4 1h20v13H4z" fill="#eef1f7" /><path d="M4 1h20v3H4z" fill="#d44a4a" />
          <path d="M6 7h16M6 10h16" stroke="#aab" /><path d="M7 17h14v9H7z" fill="#c4c8ce" /><path d="M10 19h4v6h-4z" fill="#333" />
        </Ico>
        Save CSV
      </Action>
      <Action>
        <Ico w={33} h={33} vb="0 0 33 33">
          <path d="M6 6l6-5.500h20v27l-5 5H6z" fill="#2a2a2a" stroke="#000" />
          <path d="M6 6l6-5h20l-5 5z" fill="#d8d8d0" stroke="#000" /><path d="M27 6l5-5v26l-5 5z" fill="#8c8c84" stroke="#000" />
          <path d="M8 9h14v5H8z" fill="#fff" stroke="#118a22" /><path d="M9 20h14l-2 9H9z" fill="#1414a0" />
          <path d="M1 18h15v12H1z" fill="#d0ccd4" stroke="#000" /><path d="M5 20h8v5H5z" fill="#e8a8b8" stroke="#224" />
          <path d="M22 9l-6 10M25 9l-4 14" stroke="#22a" strokeWidth="1.500" />
        </Ico>
        Save
      </Action>
    </Actions>
  </Win>
);

const UnmanagedWindow = () => (
  <Win $x={571} $y={753} $w={591} $frame>
    <Caption>
      <CaptionText $size={12}>Elements NOT Managed:0</CaptionText>
      <CaptionButton $w={41} $h={22} $after={17} aria-label="Empty"><Ico s={16}><BinArt /></Ico></CaptionButton>
      <CaptionButton $h={25} aria-label="Minimize"><Ico s={15}><path d="M1 14.500h10" stroke="#000" strokeWidth="3" /></Ico></CaptionButton>
      <CaptionButton $h={25} aria-label="Restore"><RestoreGlyph /></CaptionButton>
      <CaptionButton $h={25} $after={1} aria-label="Close"><CloseGlyph /></CaptionButton>
    </Caption>
    <Tray />
  </Win>
);

export default function App() {
  return (
    <Page>
      <GlobalStyle />
      <TitleBar>
        <Ico s={20}>
          <path d="M0 0h16v16H0z" fill="#0e7c80" />
          <path d="M0 4l12 12M3 0l13 13M9 0l7 7" stroke="#e8f4f4" strokeWidth="1" />
          <path d="M0 8l4-4 2 2 6-5M0 14l6-6 2 2 8-7M5 15l5-4 2 1 4-3" fill="none" stroke="#e0a030" strokeWidth="2" />
        </Ico>
        <AppName>Master AT - Ver. 2.51 R3</AppName>
        <FrameButtons>
          <FrameButton aria-label="Minimize"><Ico s={14}><path d="M2 10h12v4H2z" fill="#f4f4f4" stroke="#555" /></Ico></FrameButton>
          <FrameButton aria-label="Restore"><Ico s={16}><path d="M6 1.500h8v9H6zM2 5h8v9H2zM5 8h2v3H5z" fill="#f4f4f4" stroke="#555" /></Ico></FrameButton>
          <FrameButton $danger aria-label="Close"><Ico s={14}><path d="M3 3l10 10M13 3L3 13" stroke="#555" strokeWidth="4.500" /><path d="M3 3l10 10M13 3L3 13" stroke="#fff" strokeWidth="3" /></Ico></FrameButton>
        </FrameButtons>
      </TitleBar>

      <Workspace>
        <Sidebar>
          <GroupHeader>
            <GroupIcon><Ico s={33}><MasterArt /></Ico></GroupIcon>
            Generic elements<Chevrons />
          </GroupHeader>
          <GroupRule />
          <LinkList items={generic} />
          <GroupHeader>
            <GroupIcon>
              <Ico w={34} h={30} vb="0 0 34 30">
                <path d="M5 11L13 3l2-1v4l8 5zM11 20l8 6 2-4M24 20v8l-3 0" fill="#e4f0f4" stroke="#4d7f90" strokeWidth="1.200" />
                <path d="M5 12h21q4 0 4 4l-2 4H8q-4-1-4-4z" fill="#dc1212" stroke="#8e0a0a" />
                <circle cx="20" cy="16" r="2.800" fill="#fff" /><path d="M20 14v4M18 16h4" stroke="#dc1212" />
              </Ico>
            </GroupIcon>
            Utility<Chevrons />
          </GroupHeader>
          <GroupRule />
          <LinkList items={utility} />
          <SwapButton aria-label="Swap tables"><SwapArt /></SwapButton>
        </Sidebar>
        <SplitBar dir="left" top />

        <Main>
          <JobBar>Job Order:</JobBar>
          <Console>
            <StatusRow>
              <RunningMode>RUNNING MODE: SEQUENCE</RunningMode>
              <StatusColumn>
                <MachineState>Machine ready</MachineState>
                <ThicknessRow>
                  <Thickness>Maximum Thickness:16</Thickness>
                  <RearTab aria-label="Previous" />
                  <RearTab aria-label="Next" />
                </ThicknessRow>
              </StatusColumn>
            </StatusRow>
            <ToolRow>
              <Groove />
              <ToolButton aria-label="Start"><Gear /></ToolButton>
              <ToolButton $gap={7} $line="thin" aria-label="Stop"><Gear stop /></ToolButton>
              <ToolSeparator />
              <ToolButton $gap={7} aria-label="Barcode on"><Barcode /></ToolButton>
              <ToolButton $gap={7} aria-label="Barcode off"><Barcode faint /></ToolButton>
              <ToolSeparator />
              <ToolButton $gap={224} $line="full" aria-label="Simulation"><Film /></ToolButton>
              <ToolButton $gap={5} $line="full" aria-label="Solid view"><Diamond /></ToolButton>
            </ToolRow>
            <InfoRow><InfoCell /><InfoCell /></InfoRow>
          </Console>
          <ViewRow>
            <Canvas><Worktable /></Canvas>
            <SplitBar dir="right" />
            <ToolRack>
              {rack.map((code, i) => (
                <RackItem key={code}>
                  <RackArt dark={i > 1} />
                  <RackLabel>{code}</RackLabel>
                </RackItem>
              ))}
            </ToolRack>
          </ViewRow>
        </Main>
      </Workspace>

      <ListBar>Program List</ListBar>
      <ProgramList>
        <Thumb aria-label="Program 1"><ThumbArt /><ThumbIndex>1</ThumbIndex></Thumb>
      </ProgramList>
      <TaskStrip />

      <BaseWindow />
      <SequenceWindow />
      <UnmanagedWindow />
    </Page>
  );
}
